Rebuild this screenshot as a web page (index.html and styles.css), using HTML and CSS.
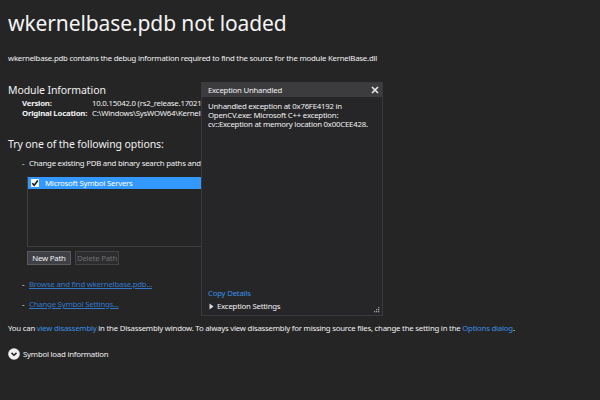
FILE: index.html
```html
<!DOCTYPE html>
<html>
<head>
<meta charset="utf-8">
<link rel="stylesheet" href="styles.css">
</head>
<body>
<main class="page">
  <h1 class="title">wkernelbase.pdb not loaded</h1>
  <p class="desc">wkernelbase.pdb contains the debug information required to find the source for the module KernelBase.dll</p>

  <h2 class="section first">Module Information</h2>
  <div class="info">
    <span class="label">Version:</span><span class="value">10.0.15042.0 (rs2_release.170219-2329)</span>
    <span class="label">Original Location:</span><span class="value">C:\Windows\SysWOW64\KernelBase.dll</span>
  </div>

  <h2 class="section">Try one of the following options:</h2>
  <ul class="options">
    <li class="opt">
      <div class="opt-line"><span class="dash">-</span><span>Change existing PDB and binary search paths and retry:</span></div>
      <div class="listbox">
        <div class="row selected"><span class="check"><svg width="8" height="8" viewBox="0 0 8 8"><path d="M1.3 4.2 L3.2 6.2 L6.8 1.6" fill="none" stroke="#1b1b1b" stroke-width="1.6"/></svg></span>Microsoft Symbol Servers</div>
      </div>
      <div class="buttons">
        <button class="btn">New Path</button>
        <button class="btn disabled">Delete Path</button>
      </div>
    </li>
    <li class="opt link-item"><span class="dash">-</span><a class="ulink" href="#">Browse and find wkernelbase.pdb...</a></li>
    <li class="opt link-item"><span class="dash">-</span><a class="ulink" href="#">Change Symbol Settings...</a></li>
  </ul>

  <p class="note">You can <a class="ilink" href="#">view disassembly</a> in the Disassembly window. To always view disassembly for missing source files, change the setting in the <a class="ilink" href="#">Options dialog</a>.</p>

  <div class="expander">
    <span class="chev"><svg width="12" height="12" viewBox="0 0 12 12"><circle cx="6" cy="6" r="5.8" fill="#f1f1f1"/><path d="M3.5 4.9 L6 7.3 L8.5 4.9" fill="none" stroke="#252526" stroke-width="1.5"/></svg></span>
    <span>Symbol load information</span>
  </div>
</main>

<div class="popup">
  <div class="popup-head">
    <span>Exception Unhandled</span>
    <svg class="close" width="8" height="8" viewBox="0 0 8 8"><path d="M1 1 L7 7 M7 1 L1 7" stroke="#e8e8e8" stroke-width="1.6"/></svg>
  </div>
  <div class="popup-body">
    <p class="msg">Unhandled exception at 0x76FE4192 in OpenCV.exe: Microsoft C++ exception: cv::Exception at memory location 0x00CEE428.</p>
    <div class="popup-foot">
      <a class="copy" href="#">Copy Details</a>
      <div class="settings"><svg width="5" height="7" viewBox="0 0 5 7"><path d="M0.5 0.5 L4.5 3.5 L0.5 6.5 Z" fill="#e0e0e0"/></svg><span>Exception Settings</span></div>
    </div>
    <svg class="grip" width="6" height="6" viewBox="0 0 6 6"><g fill="#9a9a9a"><rect x="4" y="0" width="1.3" height="1.3"/><rect x="2" y="2" width="1.3" height="1.3"/><rect x="4" y="2" width="1.3" height="1.3"/><rect x="0" y="4" width="1.3" height="1.3"/><rect x="2" y="4" width="1.3" height="1.3"/><rect x="4" y="4" width="1.3" height="1.3"/></g></svg>
  </div>
</div>
</body>
</html>
```

FILE: styles.css
```css
html, body {
  margin: 0;
  padding: 0;
  background: #252526;
  width: 600px;
  height: 400px;
  overflow: hidden;
}
body {
  font-family: "Noto Sans", "Open Sans", sans-serif;
  color: #f1f1f1;
  font-size: 7.8px;
  letter-spacing: -0.22px;
  position: relative;
}
.page {
  padding: 9px 8px 0 8px;
}
.title {
  margin: 0;
  font-size: 21px;
  font-weight: 400;
  letter-spacing: -0.1px;
  line-height: 28px;
  color: #f4f4f4;
}
.desc {
  margin: 16px 0 0 0;
  line-height: 10px;
  white-space: nowrap;
}
.section {
  margin: 18px 0 0 0;
  font-size: 10.5px;
  letter-spacing: -0.1px;
  font-weight: 400;
  line-height: 16px;
}
.section.first { margin-top: 19px; }
.info {
  display: grid;
  grid-template-columns: 70px auto;
  margin: 0 0 0 14px;
  line-height: 10px;
  white-space: nowrap;
}
.label { font-weight: 700; }
.options {
  list-style: none;
  margin: 6px 0 0 0;
  padding: 0 0 0 14px;
}
.opt-line, .link-item {
  display: flex;
  align-items: center;
  line-height: 10px;
  white-space: nowrap;
}
.dash {
  width: 7px;
}
.listbox {
  margin: 8px 0 0 5px;
  width: 300px;
  height: 69px;
  border-left: 1px solid #3f3f46;
  border-bottom: 1px solid #3f3f46;
  padding-top: 1px;
  background: #252526;
}
.row {
  height: 12px;
  display: flex;
  align-items: center;
  line-height: 12px;
}
.row.selected {
  background: #3399ff;
  color: #ffffff;
}
.check {
  width: 8px;
  height: 8px;
  background: #f6f6f6;
  margin: 0 6px 0 3px;
  display: flex;
  align-items: center;
  justify-content: center;
}
.buttons {
  display: flex;
  gap: 4px;
  margin: 4px 0 0 5px;
}
.btn {
  font-family: inherit;
  font-size: 7.8px;
  letter-spacing: -0.22px;
  height: 14px;
  width: 44px;
  padding: 0;
  background: #3f3f46;
  color: #f1f1f1;
  border: 1px solid #5a5a5e;
  line-height: 12px;
}
.btn.disabled {
  background: #2d2d30;
  color: #6d6d6d;
  border-color: #434346;
}
.link-item { margin-top: 14px; }
.link-item + .link-item { margin-top: 10px; }
.ulink {
  color: #3277c8;
  text-decoration: underline;
}
.note {
  margin: 14px 0 0 0;
  line-height: 10px;
  white-space: nowrap;
}
.ilink {
  color: #3b8ee0;
  text-decoration: none;
}
.expander {
  margin-top: 15px;
  display: flex;
  align-items: center;
  gap: 3px;
  line-height: 12px;
}
.chev { display: flex; }

.popup {
  position: absolute;
  left: 201px;
  top: 82px;
  width: 182px;
  height: 234px;
  display: flex;
  flex-direction: column;
  background: #262628;
  box-sizing: border-box;
  border: 1px solid #3a3a3e;
}
.popup-head {
  height: 14px;
  background: #3c3c3f;
  display: flex;
  align-items: center;
  justify-content: space-between;
  padding: 0 3px 0 6px;
  flex: none;
  color: #f1f1f1;
}
.popup-body {
  flex: 1;
  display: flex;
  flex-direction: column;
  justify-content: space-between;
  padding: 5px 6px 4px 6px;
  position: relative;
}
.msg {
  margin: 0;
  line-height: 9px;
}
.popup-foot {
  display: flex;
  flex-direction: column;
  gap: 3px;
}
.copy {
  color: #3792e6;
  text-decoration: none;
  line-height: 10px;
}
.settings {
  display: flex;
  align-items: center;
  gap: 3px;
  line-height: 10px;
  padding-left: 1px;
}
.grip {
  position: absolute;
  right: 2px;
  bottom: 2px;
}
```
